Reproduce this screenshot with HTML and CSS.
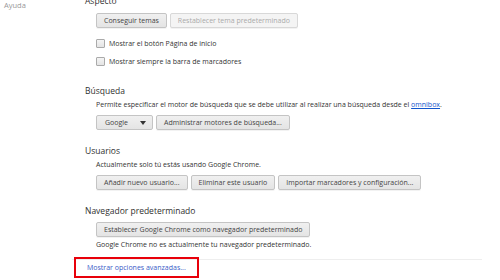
FILE: index.html
```html
<!DOCTYPE html>
<html lang="es">
<head>
<meta charset="utf-8">
<link rel="stylesheet" href="styles.css">
</head>
<body>
<div class="page">
  <nav class="nav">
    <div class="nav-item">Ayuda</div>
  </nav>
  <main class="main">
    <section class="section first">
      <h3 class="heading">Aspecto</h3>
      <div class="body">
        <div class="btn-row top">
          <button class="btn">Conseguir temas</button>
          <button class="btn" disabled>Restablecer tema predeterminado</button>
        </div>
        <label class="check"><span class="box"></span>Mostrar el botón Página de inicio</label>
        <label class="check"><span class="box"></span>Mostrar siempre la barra de marcadores</label>
      </div>
    </section>
    <section class="section">
      <h3 class="heading">Búsqueda</h3>
      <div class="body">
        <p class="desc">Permite especificar el motor de búsqueda que se debe utilizar al realizar una búsqueda desde el <a class="link" href="#">omnibox</a>.</p>
        <div class="btn-row">
          <div class="select"><span>Google</span><span class="arrow"></span></div>
          <button class="btn">Administrar motores de búsqueda...</button>
        </div>
      </div>
    </section>
    <section class="section">
      <h3 class="heading">Usuarios</h3>
      <div class="body">
        <p class="desc">Actualmente solo tú estás usando Google Chrome.</p>
        <div class="btn-row">
          <button class="btn">Añadir nuevo usuario...</button>
          <button class="btn">Eliminar este usuario</button>
          <button class="btn">Importar marcadores y configuración...</button>
        </div>
      </div>
    </section>
    <section class="section last">
      <h3 class="heading">Navegador predeterminado</h3>
      <div class="body">
        <div class="btn-row">
          <button class="btn">Establecer Google Chrome como navegador predeterminado</button>
        </div>
        <p class="desc tight">Google Chrome no es actualmente tu navegador predeterminado.</p>
      </div>
    </section>
    <div class="footer">
      <div class="advanced"><a class="adv-link" href="#">Mostrar opciones avanzadas...</a></div>
    </div>
  </main>
</div>
</body>
</html>
```
FILE: styles.css
```css
html, body {
  margin: 0;
  padding: 0;
  background: #fff;
}
body {
  font-family: "Open Sans", "Noto Sans", sans-serif;
  font-size: 7px;
  color: #333;
}
.page {
  display: grid;
  grid-template-columns: 72px 410px;
  align-items: start;
  width: 500px;
  height: 280px;
  overflow: hidden;
}
.nav {
  padding: 0 0 0 4px;
  box-sizing: border-box;
  align-self: start;
}
.nav-item {
  color: #999;
  font-size: 7.5px;
  line-height: 10px;
  margin: 0;
}
.main {
  margin-top: -6px;
}
.section {
  margin-bottom: 13.5px;
}
.section.last {
  margin-bottom: 9.5px;
}
.heading {
  margin: 0 0 0 13px;
  font-weight: normal;
  font-size: 8.5px;
  line-height: 13px;
  color: #303030;
}
.body {
  padding-left: 24px;
}
.desc {
  margin: 3.5px 0 0;
  line-height: 10px;
}
.desc.tight {
  margin-top: 3px;
}
.link {
  color: #15c;
}
.btn-row {
  display: flex;
  gap: 3px;
  margin: 5px 0 0;
}
.btn-row.top {
  margin: 6px 0 6px;
}
.btn {
  font-family: inherit;
  font-size: 7px;
  color: #444;
  height: 15px;
  padding: 0 7px;
  border: 1px solid #c4c4c4;
  border-radius: 2px;
  background: linear-gradient(#f0f0f0, #e4e4e4);
  box-shadow: 0 1px 0 rgba(0,0,0,0.05);
  margin: 0;
}
.btn:disabled {
  color: #aaa;
  background: #f4f4f4;
  border-color: #d8d8d8;
}
.select {
  display: flex;
  align-items: center;
  justify-content: space-between;
  width: 57px;
  height: 15px;
  box-sizing: border-box;
  padding: 0 6px 0 8px;
  border: 1px solid #c4c4c4;
  border-radius: 2px;
  background: linear-gradient(#f0f0f0, #e4e4e4);
  color: #444;
}
.arrow {
  width: 0;
  height: 0;
  border-left: 3px solid transparent;
  border-right: 3px solid transparent;
  border-top: 4px solid #333;
}
.check {
  display: flex;
  align-items: center;
  gap: 4px;
  height: 18px;
}
.box {
  width: 7px;
  height: 7px;
  border: 1px solid #aaa;
  border-radius: 1px;
  background: linear-gradient(#f4f4f4, #e4e4e4);
}
.footer {
  border-top: 1px solid #eee;
}
.advanced {
  margin: -3px 0 0 2px;
  width: 110px;
  height: 17px;
  border: 2px solid #e8000a;
  padding-left: 11px;
  line-height: 17px;
  box-sizing: content-box;
}
.adv-link {
  color: #3a5bc7;
  text-decoration: none;
}
```
